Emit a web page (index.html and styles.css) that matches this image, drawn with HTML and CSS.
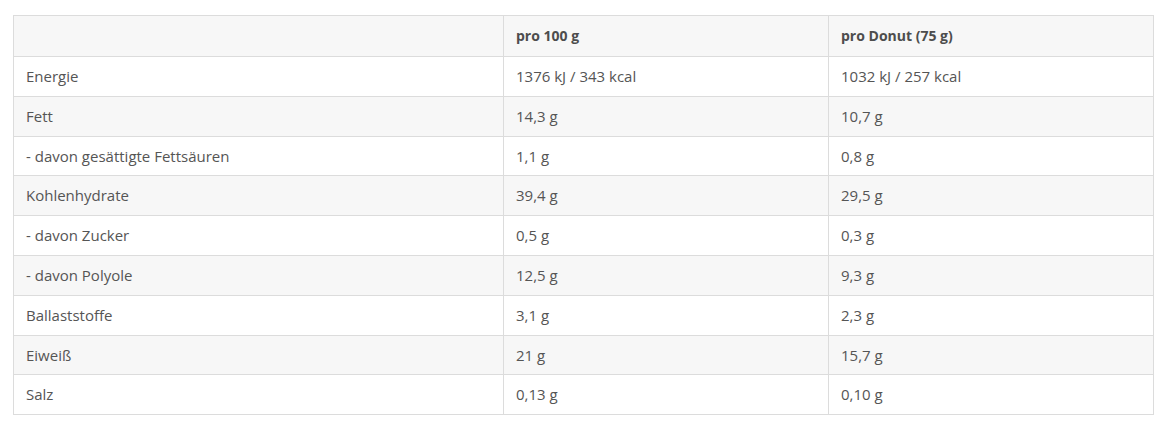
FILE: index.html
```html
<!DOCTYPE html>
<html lang="de">
<head>
<meta charset="utf-8">
<link rel="stylesheet" href="styles.css">
</head>
<body>
<table class="nutrition">
  <colgroup>
    <col class="c1"><col class="c2"><col class="c3">
  </colgroup>
  <thead>
    <tr><th></th><th>pro 100 g</th><th>pro Donut (75 g)</th></tr>
  </thead>
  <tbody>
    <tr><td>Energie</td><td>1376 kJ / 343 kcal</td><td>1032 kJ / 257 kcal</td></tr>
    <tr><td>Fett</td><td>14,3 g</td><td>10,7 g</td></tr>
    <tr><td>- davon gesättigte Fettsäuren</td><td>1,1 g</td><td>0,8 g</td></tr>
    <tr><td>Kohlenhydrate</td><td>39,4 g</td><td>29,5 g</td></tr>
    <tr><td>- davon Zucker</td><td>0,5 g</td><td>0,3 g</td></tr>
    <tr><td>- davon Polyole</td><td>12,5 g</td><td>9,3 g</td></tr>
    <tr><td>Ballaststoffe</td><td>3,1 g</td><td>2,3 g</td></tr>
    <tr><td>Eiweiß</td><td>21 g</td><td>15,7 g</td></tr>
    <tr><td>Salz</td><td>0,13 g</td><td>0,10 g</td></tr>
  </tbody>
</table>
</body>
</html>
```
FILE: styles.css
```css
html, body {
  margin: 0;
  background: #fff;
}
body {
  padding: 15px 14px 0 13px;
  font-family: "Open Sans", "Liberation Sans", sans-serif;
  font-size: 15px;
  color: #555;
}
.nutrition {
  width: 1140px;
  border-collapse: collapse;
  table-layout: fixed;
  border: 1px solid #dcdcdc;
}
.c1 { width: 490px; }
.c2 { width: 325px; }
.c3 { width: 325px; }
.nutrition th,
.nutrition td {
  border: 1px solid #dcdcdc;
  padding: 10px 12px;
  line-height: 18.8px;
  text-align: left;
  vertical-align: middle;
}
.nutrition th {
  font-size: 14px;
  font-weight: 700;
  background: #f7f7f7;
  color: #4d4d4d;
  line-height: 20px;
}
.nutrition tbody tr:nth-child(odd) td { background: #fff; }
.nutrition tbody tr:nth-child(even) td { background: #f7f7f7; }
```
